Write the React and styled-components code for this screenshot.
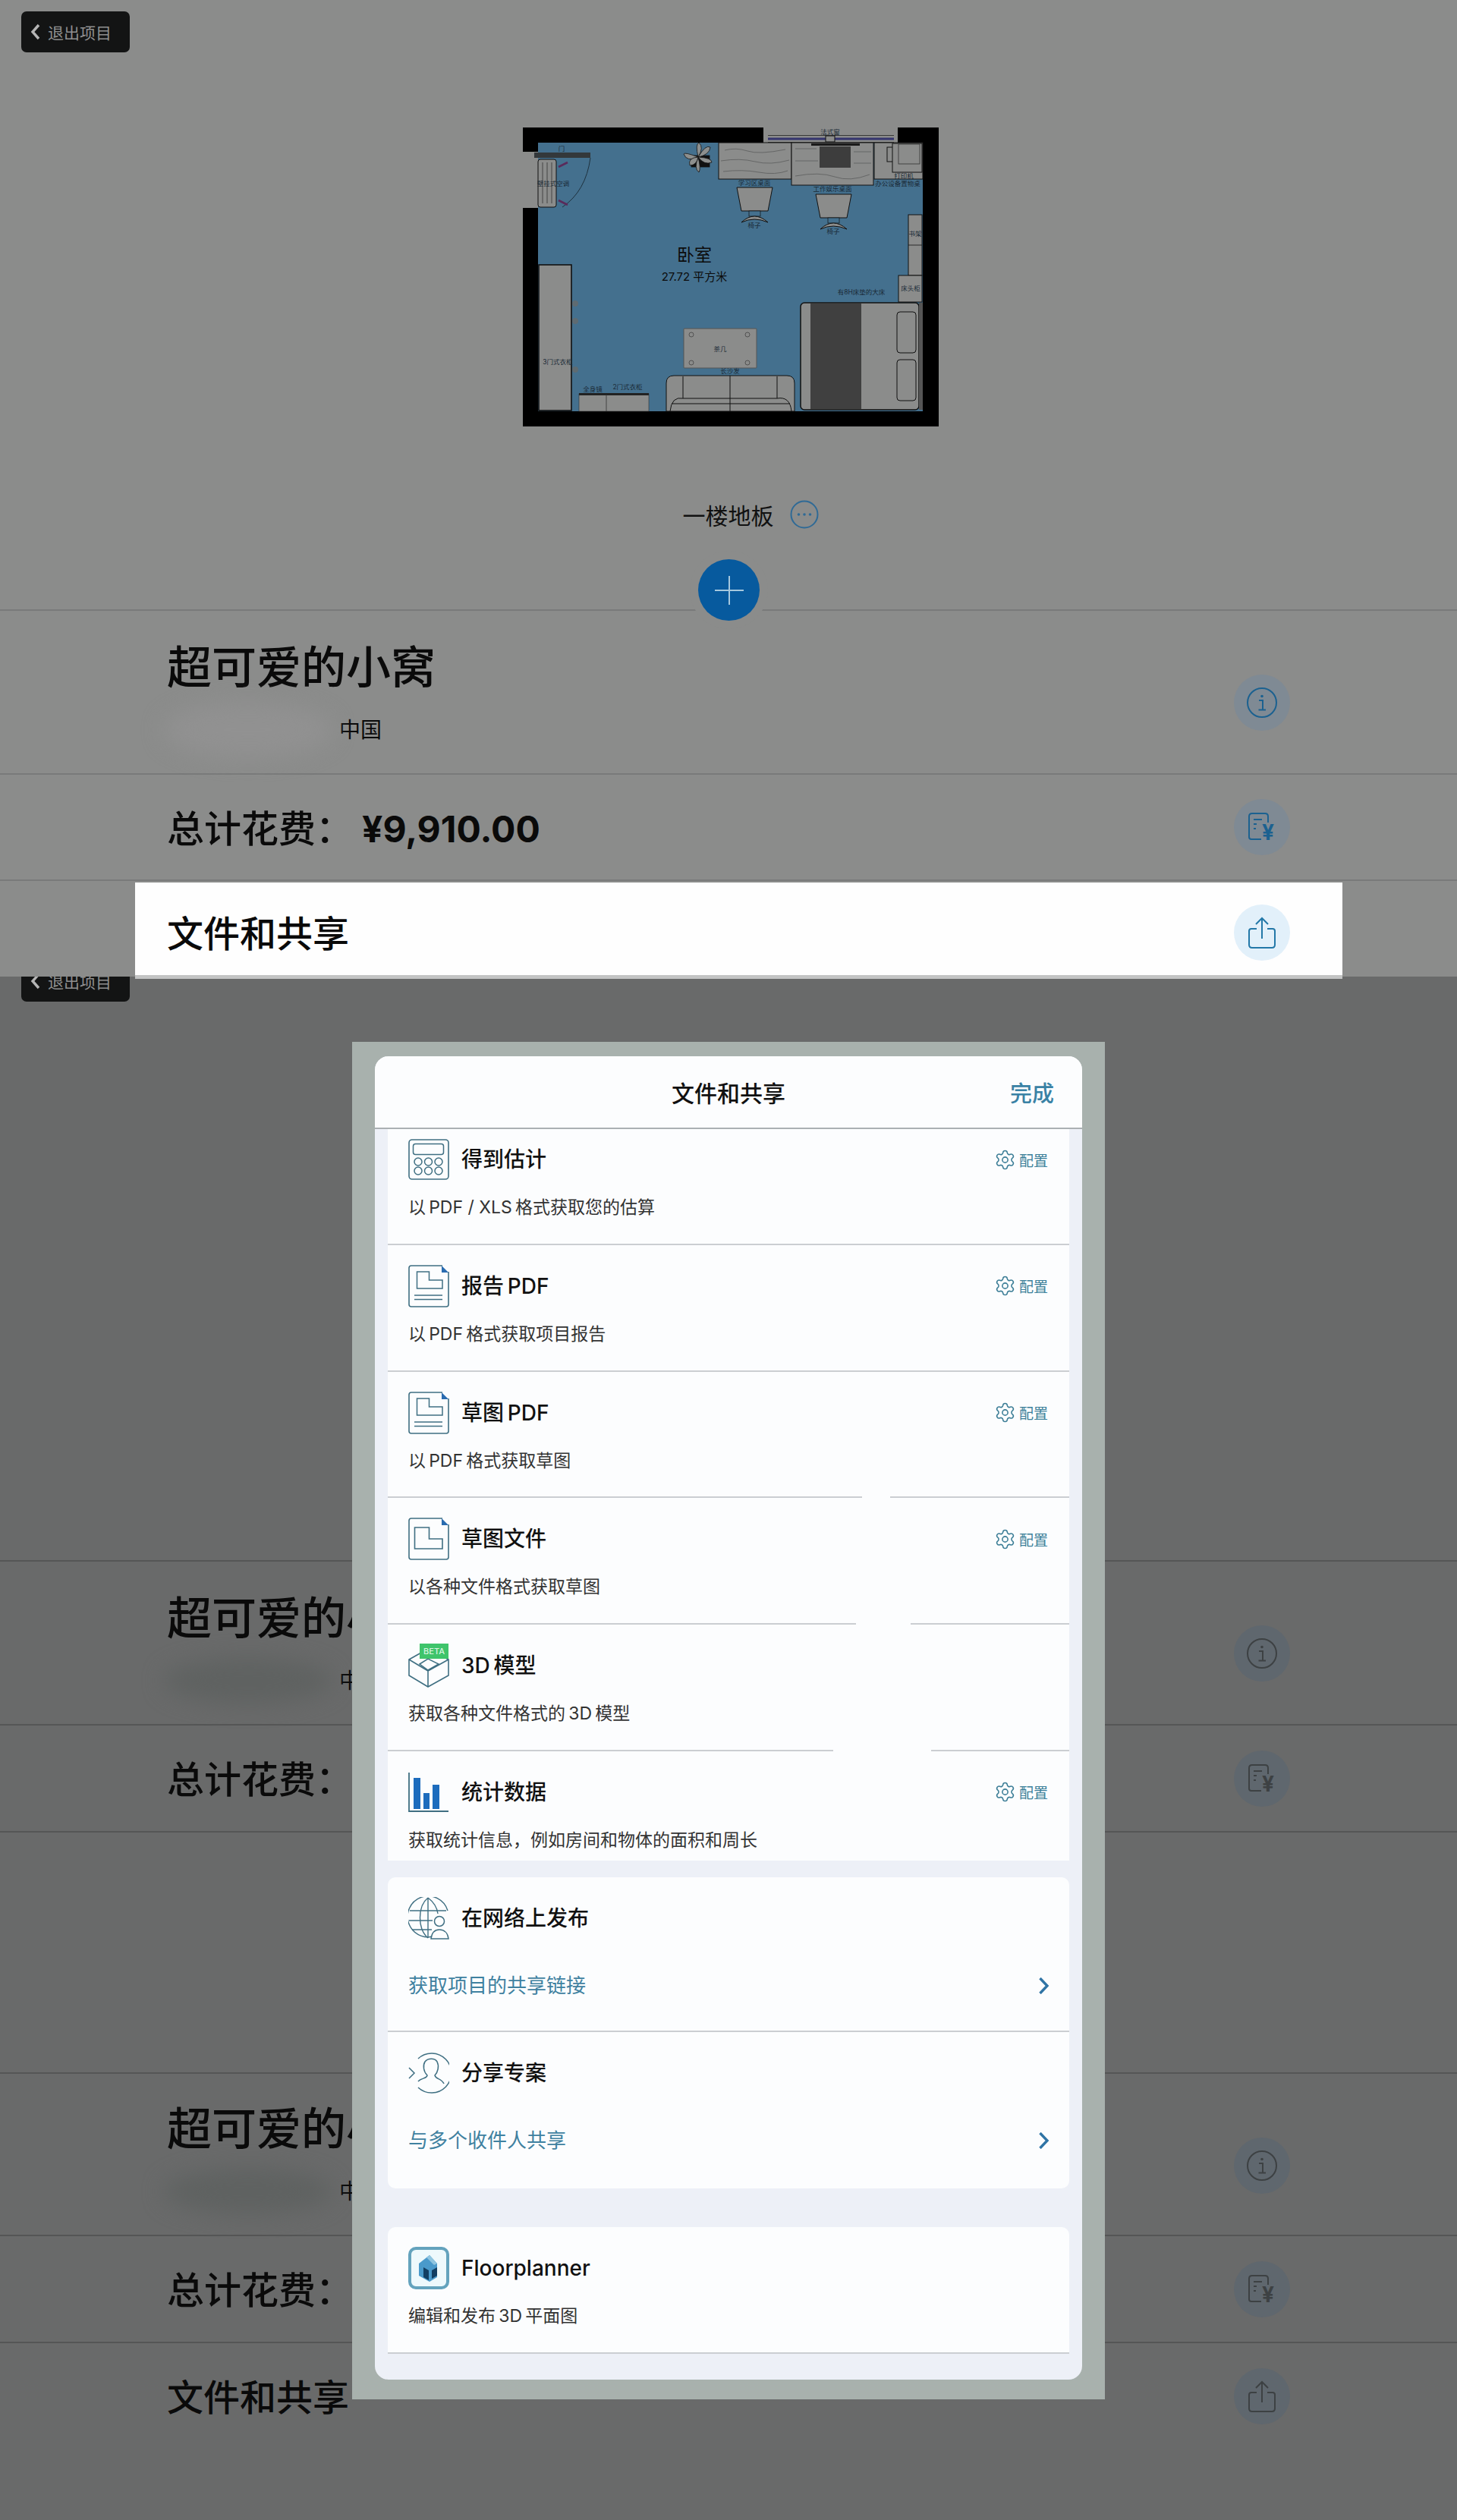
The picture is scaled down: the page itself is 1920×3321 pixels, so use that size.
import React from 'react'
import styled, { createGlobalStyle } from 'styled-components'
import { Settings } from 'lucide-react'

const GlobalStyle = createGlobalStyle`
  html, body {
    margin: 0;
    padding: 0;
    background: #696a6a;
    font-family: "Inter", "Noto Sans CJK SC", sans-serif;
  }
  * { box-sizing: border-box; }
`

const tones = {
  top: { bg: '#7f8a94', fg: '#1b6190', line: '#797a7a' },
  dim: { bg: '#5f676e', fg: '#3d4143', line: '#555656' },
  light: { bg: '#e2f0fa', fg: '#2378a8', line: '#797a7a' },
}

const Page = styled.div`
  width: 1920px;
  height: 3321px;
  overflow: hidden;
`
const TopScreen = styled.section`
  position: relative;
  z-index: 2;
  height: 1287px;
  padding-top: 15px;
  background: #8b8c8b;
`
const BottomScreen = styled.section`
  position: relative;
  height: 2034px;
  overflow: hidden;
  background: #696a6a;
`
const ExitButton = styled.div`
  display: flex;
  align-items: center;
  gap: 9px;
  width: 143px;
  height: 54px;
  margin-top: ${(p) => p.$top || 0}px;
  margin-left: 28px;
  padding-left: 11px;
  border-radius: 7px;
  background: #131414;
  color: #8f8f8f;
  font-size: 21px;
`
const PlanFrame = styled.svg`
  display: block;
  width: 548px;
  height: 394px;
  margin: 99px 0 0 689px;
`
const FloorLabel = styled.div`
  display: flex;
  align-items: center;
  justify-content: center;
  gap: 21px;
  height: 40px;
  margin-top: 96px;
  padding-left: 58px;
  color: #111;
  font-size: 30px;
`
const InfoList = styled.div`
  position: relative;
  margin-top: ${(p) => p.$top}px;
`
const AddButton = styled.div`
  position: absolute;
  top: -66px;
  left: 920px;
  z-index: 1;
  display: flex;
  align-items: center;
  justify-content: center;
  width: 81px;
  height: 81px;
  border-radius: 50%;
  background: #075a9e;
  box-shadow: 0 0 0 11px #8b8c8b;
  color: #a6c8de;
`
const InfoRow = styled.div`
  display: flex;
  align-items: ${(p) => (p.$plain ? 'center' : 'flex-start')};
  justify-content: space-between;
  height: ${(p) => p.$height}px;
  padding: 0 220px;
  border-top: 2px solid ${(p) => tones[p.$tone].line};
  color: #0a0a0a;
`
const ProjectBlock = styled.div`
  padding-top: ${(p) => p.$top}px;
`
const ProjectTitle = styled.div`
  font-size: 59px;
  font-weight: 500;
  line-height: 64px;
`
const Address = styled.div`
  display: flex;
  align-items: center;
  gap: 9px;
  margin-top: ${(p) => p.$gap}px;
  font-size: 28px;
  line-height: 40px;
`
const BlurredStreet = styled.div`
  width: 222px;
  height: ${(p) => p.$size}px;
  margin-left: -4px;
  border-radius: 50%;
  background: ${(p) => p.$color};
  filter: blur(14px);
`
const CostText = styled.div`
  margin-bottom: 4px;
  font-size: 49px;
  font-weight: 500;
  white-space: nowrap;
`
const CostValue = styled.span`
  margin-left: 12px;
  font-size: 48px;
  font-weight: 700;
`
const RowTitle = styled.div`
  margin-bottom: 4px;
  font-size: 48px;
  font-weight: 500;
`
const RoundIcon = styled.div`
  display: flex;
  flex: none;
  align-items: center;
  justify-content: center;
  width: 74px;
  height: 74px;
  margin-top: ${(p) => p.$top || 0}px;
  border-radius: 50%;
  background: ${(p) => tones[p.$tone].bg};
  color: ${(p) => tones[p.$tone].fg};
`
const Highlight = styled.div`
  position: absolute;
  top: 360px;
  right: 151px;
  left: 178px;
  z-index: 3;
  display: flex;
  align-items: center;
  justify-content: space-between;
  height: 127px;
  padding: 10px 69px 0 42px;
  border-bottom: 5px solid #c3c4c4;
  background: #fefefe;
  color: #0a0a0a;
`
const SpacerRow = styled.div`
  height: 318px;
  border-top: 2px solid ${tones.dim.line};
`
const ModalFrame = styled.div`
  position: absolute;
  top: 86px;
  left: 464px;
  z-index: 4;
  width: 992px;
  height: 1789px;
  padding: 19px 30px 26px;
  background: #a8b1ad;
`
const Sheet = styled.div`
  height: 1744px;
  overflow: hidden;
  border-radius: 18px;
  background: #edf0f7;
`
const SheetHeader = styled.header`
  display: grid;
  grid-template-columns: 1fr auto 1fr;
  align-items: center;
  height: 96px;
  padding: 0 37px;
  border-bottom: 2px solid #abb0b3;
  background: #fcfdfe;
`
const SheetTitle = styled.div`
  grid-column: 2;
  color: #111;
  font-size: 30px;
  font-weight: 500;
`
const DoneLink = styled.div`
  justify-self: end;
  color: #3a82a5;
  font-size: 29px;
  font-weight: 500;
`
const ActionList = styled.div`
  height: 964px;
  margin: 0 17px;
  overflow: hidden;
  background: #fcfdfe;
`
const Card = styled.div`
  height: ${(p) => p.$height}px;
  margin: ${(p) => p.$top}px 17px 0;
  overflow: hidden;
  border-radius: ${(p) => (p.$flatBottom ? '10px 10px 0 0' : '10px')};
  background: #fcfdfe;
`
const ActionRow = styled.div`
  position: relative;
  height: 166.75px;
  margin-top: ${(p) => p.$lift || 0}px;
  padding: 27px 28px 0 27px;
`
const RowHead = styled.div`
  display: flex;
  align-items: center;
  gap: 16px;
  height: 54px;
`
const ActionName = styled.div`
  flex: 1;
  color: #111;
  font-size: 28px;
  font-weight: 500;
  line-height: 1;
`
const Configure = styled.div`
  display: flex;
  align-items: center;
  gap: 4px;
  color: #3b7f99;
  font-size: 19px;
`
const ActionNote = styled.div`
  margin-top: 20px;
  color: #333;
  font-size: 23px;
  line-height: 32px;
`
const Separator = styled.div`
  position: absolute;
  right: 0;
  bottom: 0;
  left: 0;
  height: 2px;
  background: ${(p) =>
    p.$gap
      ? `linear-gradient(90deg, #cbced2 ${p.$gap[0]}px, transparent ${p.$gap[0]}px, transparent ${p.$gap[1]}px, #cbced2 ${p.$gap[1]}px)`
      : '#cbced2'};
`
const ShareRow = styled.div`
  position: relative;
  height: ${(p) => p.$height}px;
  padding: 27px 26px 0 27px;
`
const ShareLink = styled.div`
  display: flex;
  align-items: center;
  justify-content: space-between;
  margin-top: 44px;
  color: #3f81a0;
  font-size: 26px;
  line-height: 36px;
`

const stroke = { fill: 'none', stroke: 'currentColor' }

const ChevronLeft = () => (
  <svg width="15" height="24" viewBox="0 0 15 24">
    <path d="M12 3 L4 12 L12 21" {...stroke} strokeWidth="3.4" color="#b5b5b5" />
  </svg>
)
const Plus = () => (
  <svg width="42" height="42" viewBox="0 0 42 42">
    <path d="M21 2 V40 M2 21 H40" {...stroke} strokeWidth="2" />
  </svg>
)
const DotsIcon = () => (
  <svg width="38" height="38" viewBox="0 0 38 38" color="#2f6a96">
    <circle cx="19" cy="19" r="17.5" {...stroke} strokeWidth="2" />
    <circle cx="11.5" cy="19" r="1.8" fill="currentColor" />
    <circle cx="19" cy="19" r="1.8" fill="currentColor" />
    <circle cx="26.5" cy="19" r="1.8" fill="currentColor" />
  </svg>
)
const InfoIcon = () => (
  <svg width="42" height="42" viewBox="0 0 42 42">
    <circle cx="21" cy="21" r="19" {...stroke} strokeWidth="2" />
    <circle cx="21" cy="12.5" r="1.8" fill="currentColor" />
    <path d="M17 18 H22 V30 M16.5 30.5 H26" {...stroke} strokeWidth="2" />
  </svg>
)
const ReceiptIcon = () => (
  <svg width="40" height="42" viewBox="0 0 40 42">
    <path d="M19 37 H6 Q3 37 3 34 V7 Q3 3 7 3 H24 Q28 3 28 7 V15" {...stroke} strokeWidth="2" />
    <path d="M9 11 H20 M9 17 H13 M9 23 H12" {...stroke} strokeWidth="2" />
    <text x="28" y="38" textAnchor="middle" fontSize="28" fontWeight="700" fill="currentColor">¥</text>
  </svg>
)
const ShareIcon = () => (
  <svg width="38" height="44" viewBox="0 0 38 44">
    <path d="M19 30 V3 M11 11 L19 3 L27 11" {...stroke} strokeWidth="2" />
    <path d="M12 17 H5 Q2 17 2 20 V38 Q2 42 6 42 H32 Q36 42 36 38 V20 Q36 17 33 17 H26" {...stroke} strokeWidth="2" />
  </svg>
)
const Gear = () => <Settings size={29} strokeWidth={1.3} color="#3b7d96" />
const Chevron = () => (
  <svg width="15" height="22" viewBox="0 0 15 22">
    <path d="M2.5 1 L12 11 L2.5 21" fill="none" stroke="#2f74a5" strokeWidth="3.4" />
  </svg>
)

const Icon54 = ({ children, height = 54, width = 54 }) => (
  <svg width={width} height={height} viewBox={`0 0 ${width} ${height}`} style={{ flex: 'none' }} color="#3f6f82">
    {children}
  </svg>
)
const CalculatorIcon = () => (
  <Icon54>
    <rect x="1" y="1" width="52" height="52" rx="4" {...stroke} strokeWidth="1.6" />
    <rect x="6.5" y="6.5" width="40" height="14" rx="3" {...stroke} strokeWidth="1.5" />
    {[13, 26.5, 40].flatMap((x) =>
      [30, 42].map((y) => <circle key={`${x}-${y}`} cx={x} cy={y} r="5" {...stroke} strokeWidth="1.5" />)
    )}
  </Icon54>
)
const DocIcon = ({ lines }) => (
  <Icon54 height={56}>
    <path d="M45 1 H4 Q1 1 1 4 V52 Q1 55 4 55 H50 Q53 55 53 52 V9" {...stroke} strokeWidth="1.6" />
    <path d="M44 1 L53 10 H44 Z" fill="#2a6cb0" />
    {lines ? (
      <path d="M11.5 9 H27.5 V20 H45 V31 H11.5 Z M8 40 H45 M8 45.5 H45" {...stroke} strokeWidth="1.5" />
    ) : (
      <path d="M8.5 13 H27.5 V28 H45 V41 H8.5 Z" {...stroke} strokeWidth="1.6" />
    )}
  </Icon54>
)
const BoxIcon = () => (
  <Icon54 height={58}>
    <path d="M1 21 L26 7 L53 21 V42 L26 57 L1 42 Z" {...stroke} strokeWidth="1.6" />
    <path d="M1 21 L26 36 L53 21 M26 36 V57" {...stroke} strokeWidth="1.6" />
    <path d="M15 27 L26 20 L40 27 L26 35 Z" {...stroke} strokeWidth="1.5" />
    <rect x="15" y="0" width="38" height="20" fill="#3fc46b" />
    <text x="34" y="14" textAnchor="middle" fontSize="11" fontWeight="500" fill="#d7f5e0">BETA</text>
  </Icon54>
)
const ChartIcon = () => (
  <Icon54>
    <path d="M1 1 V52 H53" {...stroke} strokeWidth="1.8" />
    <rect x="7" y="8" width="9" height="41" fill="#1d6cbd" />
    <rect x="20" y="28" width="8" height="21" fill="#1d6cbd" />
    <rect x="32" y="17" width="9" height="32" fill="#1d6cbd" />
  </Icon54>
)
const GlobeIcon = () => (
  <Icon54 height={56}>
    <path d="M38 50 A27 27 0 1 1 52 18" {...stroke} strokeWidth="1.4" />
    <path
      d="M26 1 C12 12 12 42 26 54 M26 1 C34 7 38 14 39 22 M26 1 V54 M2 18 H50 M1 31 H32 M5 43 H31"
      {...stroke}
      strokeWidth="1.4"
    />
    <circle cx="41" cy="32" r="6.5" {...stroke} strokeWidth="1.5" />
    <path d="M30 55 C31 47 35 43 41 43 C47 43 52 47 53 55 Z" fill="#fcfdfe" stroke="currentColor" strokeWidth="1.5" />
  </Icon54>
)
const PersonIcon = () => (
  <Icon54>
    <path d="M13 8 A26 26 0 1 1 13 46" {...stroke} strokeWidth="1.5" />
    <path d="M1 20 L8 27 L1 34" {...stroke} strokeWidth="1.5" />
    <path
      d="M13 38 C17 33 24 35 25 30 C20 25 19 17 22 12 C26 7 35 7 38 12 C41 18 39 26 35 30 C36 35 44 34 47 41"
      {...stroke}
      strokeWidth="1.5"
    />
  </Icon54>
)
const FloorplannerIcon = () => (
  <Icon54 height={56}>
    <rect x="2" y="2" width="50" height="52" rx="8" fill="#eef9fc" stroke="#64a3bd" strokeWidth="4" />
    <path d="M14 22 L28 11 L38 22 V40 L28 46 L14 38 Z" fill="#4a9acb" />
    <path d="M20 27 L27 31 V44 L20 40 Z M31 31 L38 27 V38 L31 42 Z" fill="#123f63" />
    <path d="M24 14 L28 11 L38 22 L34 24 Z" fill="#8fc5e0" />
  </Icon54>
)

const label = { fontFamily: '"Inter", "Noto Sans CJK SC", sans-serif', textAnchor: 'middle' }
const planLabels = [
  ['法式窗', 1094, 177],
  ['门', 740, 199],
  ['壁挂式空调', 729, 245],
  ['学习区桌面', 994, 244],
  ['工作娱乐桌面', 1097, 252],
  ['打印机', 1191, 235],
  ['办公设备置物桌', 1183, 245],
  ['椅子', 994, 300],
  ['椅子', 1098, 308],
  ['书架', 1206, 311],
  ['床头柜', 1200, 383],
  ['有8H床垫的大床', 1135, 388],
  ['茶几', 949, 463],
  ['长沙发', 962, 492],
  ['3门式衣柜', 735, 480],
  ['全身镜', 781, 516],
  ['2门式衣柜', 827, 513],
]
const furniture = { fill: '#8b8c8b', stroke: '#111', strokeWidth: 1 }
const wave = { fill: 'none', stroke: '#5c5d5d', strokeWidth: 0.8 }

const Chair = ({ x, y }) => (
  <g>
    <path d={`M${x} ${y} H${x + 47} L${x + 41} ${y + 31} H${x + 6} Z`} {...furniture} />
    <rect x={x + 16} y={y + 31} width="15" height="7" fill="#44708e" stroke="#111" strokeWidth="0.7" />
    <path d={`M${x + 6} ${y + 46} Q${x + 23} ${y + 30} ${x + 41} ${y + 46} Q${x + 23} ${y + 38} ${x + 6} ${y + 46} Z`} {...furniture} />
  </g>
)

const FloorPlan = () => (
  <PlanFrame viewBox="689 168 548 394">
    <rect x="689" y="168" width="548" height="394" fill="#000" />
    <rect x="709" y="188" width="507" height="354" fill="#44708e" />
    <rect x="1006" y="168" width="177" height="20" fill="#8b8c8b" />
    <rect x="689" y="200" width="20" height="74" fill="#8b8c8b" />
    <path d="M1012 183 H1178" stroke="#34346e" strokeWidth="3" />
    <path d="M1012 178.5 H1178 M1012 187.5 H1178" stroke="#222" strokeWidth="0.8" />
    <rect x="1088" y="179" width="12" height="8" fill="#8b8c8b" stroke="#111" strokeWidth="1" />
    <rect x="704" y="201" width="74" height="7" fill="#33383b" />
    <path d="M778 208 Q772 252 741 273" fill="none" stroke="#1a2a36" strokeWidth="0.9" />
    <rect x="709" y="210" width="24" height="63" rx="3" {...furniture} />
    <path d="M715 214 V268 M721 214 V268 M727 214 V268" stroke="#333" strokeWidth="0.8" />
    <path d="M736 220 L748 214 M736 264 L748 270" stroke="#5a2a5a" strokeWidth="2.6" />
    <g fill="#8d8f8e" stroke="#111" strokeWidth="0.8">
      <rect x="911" y="205" width="24" height="15" fill="#111" />
      <path d="M920 207 Q902 200 901 203 Q905 214 920 207 Z" />
      <path d="M920 207 Q916 190 921 188 Q928 194 920 207 Z" />
      <path d="M920 207 Q930 190 936 194 Q935 204 920 207 Z" />
      <path d="M920 207 Q938 208 938 214 Q928 218 920 207 Z" />
      <path d="M920 207 Q924 222 921 227 Q914 222 920 207 Z" />
      <path d="M920 207 Q906 208 909 218 Q918 218 920 207 Z" />
    </g>
    <rect x="947" y="188" width="96" height="48" {...furniture} />
    <rect x="1043" y="188" width="108" height="56" {...furniture} />
    <rect x="1152" y="188" width="64" height="48" {...furniture} />
    <path d="M955 198 Q970 194 985 199 T1035 197 M950 212 Q975 208 995 213 T1040 211 M953 226 Q978 223 1000 227 T1038 225 M1048 196 H1076 M1125 200 H1148 M1048 232 Q1080 226 1100 233 T1146 230 M1048 212 H1078 M1125 215 H1148" {...wave} />
    <rect x="1080" y="193" width="41" height="28" fill="#3d3d3d" />
    <rect x="1069" y="189" width="64" height="3" fill="#1a1a1a" />
    <rect x="1169" y="194" width="8" height="19" {...furniture} />
    <rect x="1176" y="189" width="39" height="38" {...furniture} />
    <rect x="1184" y="190" width="28" height="26" fill="none" stroke="#333" strokeWidth="0.8" />
    <Chair x={971} y={247} />
    <Chair x={1075} y={256} />
    <rect x="1197" y="283" width="18" height="80" {...furniture} />
    <path d="M1197 323 H1215" stroke="#111" strokeWidth="0.8" />
    <rect x="1184" y="363" width="31" height="35" {...furniture} />
    <rect x="1055" y="399" width="156" height="141" rx="5" fill="#8b8c8b" stroke="#111" strokeWidth="1.5" />
    <rect x="1068" y="400" width="67" height="139" fill="#404040" />
    <rect x="1182" y="411" width="25" height="54" rx="4" fill="none" stroke="#111" strokeWidth="1" />
    <rect x="1182" y="474" width="25" height="54" rx="4" fill="none" stroke="#111" strokeWidth="1" />
    <rect x="1211" y="399" width="5" height="141" fill="#555" />
    <rect x="710" y="349" width="43" height="192" fill="#8b8c8b" stroke="#111" strokeWidth="1.6" />
    <circle cx="758" cy="400" r="4" fill="#5e6b72" />
    <circle cx="758" cy="423" r="4" fill="#5e6b72" />
    <circle cx="758" cy="487" r="4" fill="#5e6b72" />
    <rect x="763" y="519" width="92" height="23" fill="#8b8c8b" stroke="#333" strokeWidth="0.6" />
    <rect x="763" y="518" width="92" height="3" fill="#222" />
    <path d="M799 520 V542" stroke="#333" strokeWidth="0.8" />
    <rect x="901" y="433" width="96" height="52" rx="1" fill="#8b8c8b" stroke="#555" strokeWidth="1" />
    <g fill="none" stroke="#444" strokeWidth="0.8">
      <circle cx="911" cy="441" r="3" />
      <circle cx="985" cy="441" r="3" />
      <circle cx="911" cy="478" r="3" />
      <circle cx="985" cy="478" r="3" />
    </g>
    <path d="M878 542 V505 Q878 495 888 495 H1037 Q1047 495 1047 505 V542 Z" {...furniture} />
    <path d="M900 525 V496 M1024 525 V496 M962 495 V542" stroke="#111" strokeWidth="1" fill="none" />
    <path d="M883 542 Q885 522 900 525 H1024 Q1041 522 1043 542 M885 532 H1041" stroke="#111" strokeWidth="1" fill="none" />
    <text x="915" y="344" fontSize="23" fill="#0c0c0c" {...label}>卧室</text>
    <text x="915" y="370" fontSize="15" fill="#0c0c0c" {...label}>27.72 平方米</text>
    {planLabels.map(([name, x, y]) => (
      <text key={`${name}-${x}`} x={x} y={y} fontSize="8.5" fill="#1a2a36" {...label}>{name}</text>
    ))}
  </PlanFrame>
)

const ProjectRow = ({ tone, height, blur, blurSize, titleTop, addressGap }) => (
  <InfoRow $tone={tone} $height={height}>
    <ProjectBlock $top={titleTop}>
      <ProjectTitle>超可爱的小窝</ProjectTitle>
      <Address $gap={addressGap}>
        <BlurredStreet $color={blur} $size={blurSize} />
        <span>中国</span>
      </Address>
    </ProjectBlock>
    <RoundIcon $tone={tone} $top={84}>
      <InfoIcon />
    </RoundIcon>
  </InfoRow>
)
const CostRow = ({ tone, height }) => (
  <InfoRow $plain $tone={tone} $height={height}>
    <CostText>
      总计花费：<CostValue>¥9,910.00</CostValue>
    </CostText>
    <RoundIcon $tone={tone}>
      <ReceiptIcon />
    </RoundIcon>
  </InfoRow>
)

const actions = [
  { name: '得到估计', note: '以\u2009PDF / XLS\u2009格式获取您的估算', icon: <CalculatorIcon />, config: true },
  { name: '报告\u2009PDF', note: '以\u2009PDF\u2009格式获取项目报告', icon: <DocIcon lines />, config: true },
  { name: '草图\u2009PDF', note: '以\u2009PDF\u2009格式获取草图', icon: <DocIcon lines />, config: true, gap: [625, 662] },
  { name: '草图文件', note: '以各种文件格式获取草图', icon: <DocIcon />, config: true, gap: [617, 689] },
  { name: '3D\u2009模型', note: '获取各种文件格式的\u20093D\u2009模型', icon: <BoxIcon />, gap: [587, 716] },
  { name: '统计数据', note: '获取统计信息，例如房间和物体的面积和周长', icon: <ChartIcon />, config: true, noLine: true },
]

export default function App() {
  return (
    <Page>
      <GlobalStyle />
      <TopScreen>
        <ExitButton>
          <ChevronLeft />
          退出项目
        </ExitButton>
        <FloorPlan />
        <FloorLabel>
          一楼地板
          <DotsIcon />
        </FloorLabel>
        <InfoList $top={105}>
          <AddButton>
            <Plus />
          </AddButton>
          <ProjectRow tone="top" height={216} blur="#919191" blurSize={72} titleTop={43} addressGap={14} />
          <CostRow tone="top" height={140} />
          <InfoRow $plain $tone="top" $height={127} />
          <Highlight>
            <RowTitle>文件和共享</RowTitle>
            <RoundIcon $tone="light">
              <ShareIcon />
            </RoundIcon>
          </Highlight>
        </InfoList>
      </TopScreen>
      <BottomScreen>
        <ExitButton $top={-21}>
          <ChevronLeft />
          退出项目
        </ExitButton>
        <InfoList $top={736}>
          <ProjectRow tone="dim" height={216} blur="#5f6261" blurSize={60} titleTop={43} addressGap={20} />
          <CostRow tone="dim" height={141} />
          <SpacerRow />
          <ProjectRow tone="dim" height={214} blur="#5f6261" blurSize={60} titleTop={41} addressGap={20} />
          <CostRow tone="dim" height={141} />
          <InfoRow $plain $tone="dim" $height={142}>
            <RowTitle>文件和共享</RowTitle>
            <RoundIcon $tone="dim">
              <ShareIcon />
            </RoundIcon>
          </InfoRow>
        </InfoList>
        <ModalFrame>
          <Sheet>
            <SheetHeader>
              <SheetTitle>文件和共享</SheetTitle>
              <DoneLink>完成</DoneLink>
            </SheetHeader>
            <ActionList>
              {actions.map((a, i) => (
                <ActionRow key={a.name} $lift={i === 0 ? -14 : 0}>
                  <RowHead>
                    {a.icon}
                    <ActionName>{a.name}</ActionName>
                    {a.config && (
                      <Configure>
                        <Gear />
                        配置
                      </Configure>
                    )}
                  </RowHead>
                  <ActionNote>{a.note}</ActionNote>
                  {!a.noLine && <Separator $gap={a.gap} />}
                </ActionRow>
              ))}
            </ActionList>
            <Card $top={22} $height={410}>
              <ShareRow $height={204}>
                <RowHead>
                  <GlobeIcon />
                  <ActionName>在网络上发布</ActionName>
                </RowHead>
                <ShareLink>
                  获取项目的共享链接
                  <Chevron />
                </ShareLink>
                <Separator />
              </ShareRow>
              <ShareRow $height={206}>
                <RowHead>
                  <PersonIcon />
                  <ActionName>分享专案</ActionName>
                </RowHead>
                <ShareLink>
                  与多个收件人共享
                  <Chevron />
                </ShareLink>
              </ShareRow>
            </Card>
            <Card $top={51} $height={167} $flatBottom>
              <ActionRow>
                <RowHead>
                  <FloorplannerIcon />
                  <ActionName>Floorplanner</ActionName>
                </RowHead>
                <ActionNote>编辑和发布&#8201;3D&#8201;平面图</ActionNote>
                <Separator />
              </ActionRow>
            </Card>
          </Sheet>
        </ModalFrame>
      </BottomScreen>
    </Page>
  )
}
